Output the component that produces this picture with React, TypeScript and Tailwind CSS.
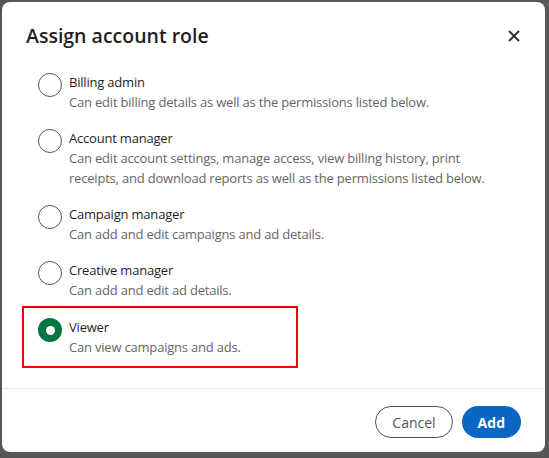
import React, { useState } from "react";

type Role = {
  id: string;
  title: string;
  description: string;
};

const roles: Role[] = [
  {
    id: "billing",
    title: "Billing admin",
    description: "Can edit billing details as well as the permissions listed below."
  },
  {
    id: "account",
    title: "Account manager",
    description:
      "Can edit account settings, manage access, view billing history, print receipts, and download reports as well as the permissions listed below."
  },
  {
    id: "campaign",
    title: "Campaign manager",
    description: "Can add and edit campaigns and ad details."
  },
  {
    id: "creative",
    title: "Creative manager",
    description: "Can add and edit ad details."
  },
  {
    id: "viewer",
    title: "Viewer",
    description: "Can view campaigns and ads."
  }
];

function RadioDot({ checked }: { checked: boolean }) {
  if (checked) {
    return (
      <span className="mt-[1px] flex h-6 w-6 shrink-0 items-center justify-center rounded-full bg-[#057642]">
        <span className="h-[9px] w-[9px] rounded-full bg-white" />
      </span>
    );
  }
  return <span className="mt-[1px] h-6 w-6 shrink-0 rounded-full border border-[#555]" />;
}

export default function App() {
  const [selected, setSelected] = useState("viewer");

  return (
    <div
      className="h-[458px] w-[549px] bg-[#575757] pb-[6px] pl-[2px] pr-[4px] pt-[2px]"
      style={{ fontFamily: '"Open Sans", "Noto Sans", Arial, sans-serif' }}
    >
      <div className="flex h-full flex-col rounded-lg bg-white">
        <div className="flex items-center justify-between pl-6 pr-[19px] pt-[22px]">
          <h2 className="text-[19.5px] font-semibold leading-6 text-[#1f1f1f]">Assign account role</h2>
          <button type="button" className="flex h-6 w-6 items-center justify-center text-[#333]" aria-label="Close">
            <svg width="14" height="14" viewBox="0 0 14 14" fill="none">
              <path d="M2 2 L12 12 M12 2 L2 12" stroke="currentColor" strokeWidth="2" />
            </svg>
          </button>
        </div>

        <div className="flex flex-1 flex-col gap-[16px] pl-9 pr-6 pt-[24px]">
          {roles.map((role) => {
            const checked = selected === role.id;
            const row = (
              <button
                type="button"
                onClick={() => setSelected(role.id)}
                className="flex items-start gap-[7px] text-left"
              >
                <RadioDot checked={checked} />
                <span className="flex max-w-[425px] flex-col tracking-[-0.2px]">
                  <span className="text-[13px] leading-5 text-[#1f1f1f]">{role.title}</span>
                  <span className="text-[13px] leading-5 text-[#666]">{role.description}</span>
                </span>
              </button>
            );
            if (role.id === "viewer") {
              return (
                <div key={role.id} className="-ml-4 -mt-[10px] w-[276px] border-2 border-[#ee0000] px-[14px] py-[9px]">
                  {row}
                </div>
              );
            }
            return <div key={role.id}>{row}</div>;
          })}
        </div>

        <div className="flex justify-end gap-[9px] border-t border-[#e8e8e8] pb-[14px] pr-6 pt-[17px]">
          <button
            type="button"
            className="h-8 rounded-full border border-[#555] px-4 text-[14px] text-[#555]"
          >
            Cancel
          </button>
          <button type="button" className="h-8 rounded-full bg-[#0a66c2] px-4 text-[14px] font-bold text-white">
            Add
          </button>
        </div>
      </div>
    </div>
  );
}
